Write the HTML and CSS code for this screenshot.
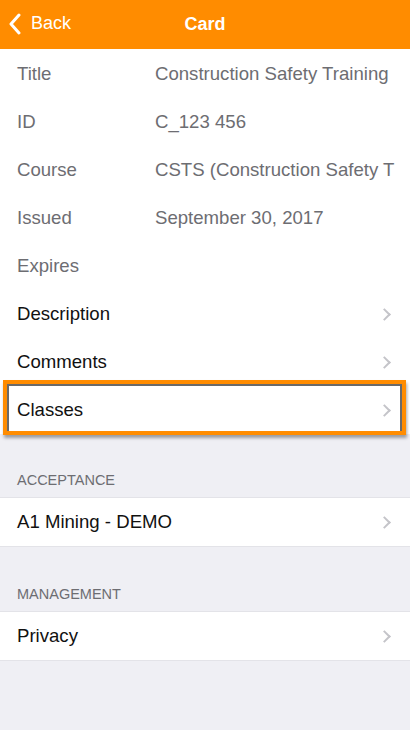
FILE: index.html
```html
<!DOCTYPE html>
<html>
<head>
<meta charset="utf-8">
<link rel="stylesheet" href="styles.css">
</head>
<body>
<header class="nav">
  <div class="back">
    <svg class="back-icon" width="14" height="22" viewBox="0 0 14 22"><path d="M11 2 L3 11 L11 20" fill="none" stroke="#fff" stroke-width="3" stroke-linecap="round" stroke-linejoin="round"/></svg>
    <span>Back</span>
  </div>
  <div class="nav-title">Card</div>
</header>
<main>
  <section class="group first">
    <div class="row"><span class="label">Title</span><span class="value">Construction Safety Training</span></div>
    <div class="row"><span class="label">ID</span><span class="value">C_123 456</span></div>
    <div class="row"><span class="label">Course</span><span class="value">CSTS (Construction Safety T</span></div>
    <div class="row"><span class="label">Issued</span><span class="value">September 30, 2017</span></div>
    <div class="row"><span class="label">Expires</span><span class="value"></span></div>
    <div class="row link"><span class="text">Description</span><span class="chev"></span></div>
    <div class="row link"><span class="text">Comments</span><span class="chev"></span></div>
    <div class="row link highlight"><span class="text">Classes</span><span class="chev"></span></div>
  </section>
  <div class="section-head">ACCEPTANCE</div>
  <section class="group">
    <div class="row link"><span class="text">A1 Mining - DEMO</span><span class="chev"></span></div>
  </section>
  <div class="section-head second">MANAGEMENT</div>
  <section class="group">
    <div class="row link"><span class="text">Privacy</span><span class="chev"></span></div>
  </section>
</main>
</body>
</html>
```
FILE: styles.css
```css
* { box-sizing: border-box; }
html, body { margin: 0; padding: 0; }
body {
  width: 410px;
  height: 730px;
  overflow: hidden;
  background: #efeff4;
  font-family: "Liberation Sans", Arial, sans-serif;
}
.nav {
  height: 49px;
  background: #ff8c00;
  display: flex;
  align-items: center;
  justify-content: center;
  position: relative;
  color: #fff;
}
.back {
  position: absolute;
  left: 8px;
  top: 0;
  height: 47px;
  display: flex;
  align-items: center;
  gap: 9px;
  font-size: 18px;
}
.back-icon { display: block; }
.nav-title {
  font-size: 18px;
  font-weight: bold;
}
.group {
  background: #fff;
  border-top: 1px solid #e3e3e8;
  border-bottom: 1px solid #e3e3e8;
}
.group.first { border-top: none; border-bottom: none; padding-top: 1px; }
.row {
  height: 48px;
  display: flex;
  align-items: center;
  padding-left: 17px;
  font-size: 18.6px;
  position: relative;
}
.label {
  width: 138px;
  color: #6d6d72;
  flex: none;
}
.value {
  color: #6d6d72;
  white-space: nowrap;
  flex: none;
}
.text {
  flex: 1;
  color: #111;
}
.chev {
  width: 9px;
  height: 9px;
  border-top: 2px solid #c4c4c9;
  border-right: 2px solid #c4c4c9;
  transform: rotate(45deg);
  margin-right: 21px;
}
.highlight::after {
  content: "";
  position: absolute;
  left: 3px;
  right: 4px;
  top: -6px;
  bottom: -1px;
  border: 4px solid #ff8c00;
  box-shadow: inset 2px 2px 0 #6a6a6a, inset -2px 0 0 #6a6a6a, 1px 3px 3px rgba(0,0,0,0.35);
  pointer-events: none;
}
.section-head {
  height: 63px;
  display: flex;
  align-items: flex-end;
  padding: 0 0 9px 17px;
  font-size: 14.5px;
  color: #6d6d72;
}
.section-head.second { height: 64px; }
```
